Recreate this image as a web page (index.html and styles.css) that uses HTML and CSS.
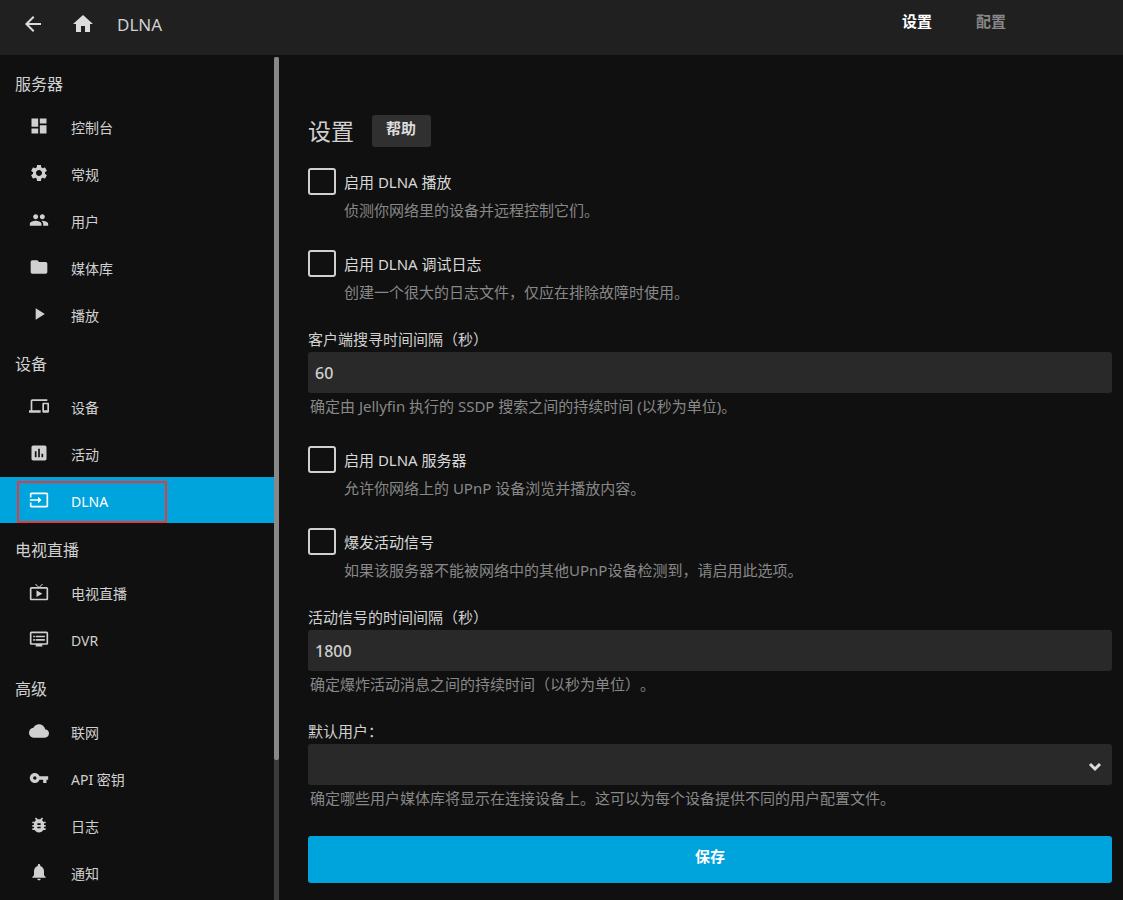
FILE: index.html
```html
<!DOCTYPE html>
<html lang="zh-CN">
<head>
<meta charset="utf-8">
<meta name="viewport" content="width=device-width, initial-scale=1">
<title>DLNA</title>
<link rel="stylesheet" href="styles.css">
</head>
<body>
<header class="topbar">
  <button class="icon-button" type="button" aria-label="返回"><svg viewBox="0 0 24 24"><path d="M20 11H7.83l5.59-5.59L12 4l-8 8 8 8 1.41-1.41L7.83 13H20v-2z"/></svg></button>
  <button class="icon-button" type="button" aria-label="首页"><svg viewBox="0 0 24 24"><path d="M10 20v-6h4v6h5v-8h3L12 3 2 12h3v8z"/></svg></button>
  <h1 class="page-title">DLNA</h1>
  <nav class="tabs">
    <a class="tab tab-active" href="#settings">设置</a>
    <a class="tab" href="#profiles">配置</a>
  </nav>
</header>
<div class="layout">
  <aside class="sidebar">
    <nav class="menu">
      <h2 class="menu-heading">服务器</h2>
      <a class="menu-item" href="#dashboard"><svg viewBox="0 0 24 24"><path d="M3 13h8V3H3v10zm0 8h8v-6H3v6zm10 0h8V11h-8v10zm0-18v6h8V3h-8z"/></svg><span>控制台</span></a>
      <a class="menu-item" href="#general"><svg viewBox="0 0 24 24"><path d="M19.14 12.94c.04-.3.06-.61.06-.94 0-.32-.02-.64-.07-.94l2.03-1.58c.18-.14.23-.41.12-.61l-1.92-3.32c-.12-.22-.37-.29-.59-.22l-2.39.96c-.5-.38-1.03-.7-1.62-.94l-.36-2.54c-.04-.24-.24-.41-.48-.41h-3.84c-.24 0-.43.17-.47.41l-.36 2.54c-.59.24-1.13.57-1.62.94l-2.39-.96c-.22-.08-.47 0-.59.22L2.74 8.87c-.12.21-.08.47.12.61l2.03 1.58c-.05.3-.09.63-.09.94s.02.64.07.94l-2.03 1.58c-.18.14-.23.41-.12.61l1.92 3.32c.12.22.37.29.59.22l2.39-.96c.5.38 1.03.7 1.62.94l.36 2.54c.05.24.24.41.48.41h3.84c.24 0 .44-.17.47-.41l.36-2.54c.59-.24 1.13-.56 1.62-.94l2.39.96c.22.08.47 0 .59-.22l1.92-3.32c.12-.22.07-.47-.12-.61l-2.01-1.58zM12 15.6c-1.98 0-3.6-1.62-3.6-3.6s1.62-3.6 3.6-3.6 3.6 1.62 3.6 3.6-1.62 3.6-3.6 3.6z"/></svg><span>常规</span></a>
      <a class="menu-item" href="#users"><svg viewBox="0 0 24 24"><path d="M16 11c1.66 0 2.99-1.34 2.99-3S17.66 5 16 5c-1.66 0-3 1.34-3 3s1.34 3 3 3zm-8 0c1.66 0 2.99-1.34 2.99-3S9.66 5 8 5C6.34 5 5 6.34 5 8s1.34 3 3 3zm0 2c-2.33 0-7 1.17-7 3.500V19h14v-2.500C15 14.170 10.330 13 8 13zm8 0c-.29 0-.62.020-.97.050 1.160.84 1.970 1.970 1.970 3.450V19h6v-2.500c0-2.330-4.670-3.500-7-3.500z"/></svg><span>用户</span></a>
      <a class="menu-item" href="#libraries"><svg viewBox="0 0 24 24"><path d="M10 4H4c-1.100 0-1.990.9-1.990 2L2 18c0 1.100.9 2 2 2h16c1.100 0 2-.9 2-2V8c0-1.100-.9-2-2-2h-8l-2-2z"/></svg><span>媒体库</span></a>
      <a class="menu-item" href="#playback"><svg viewBox="0 0 24 24"><path d="M8 5v14l11-7z"/></svg><span>播放</span></a>

      <h2 class="menu-heading">设备</h2>
      <a class="menu-item" href="#devices"><svg viewBox="0 0 24 24"><path d="M4 6h18V4H4c-1.100 0-2 .9-2 2v11H0v3h14v-3H4V6zm19 2h-6c-.55 0-1 .45-1 1v10c0 .55.45 1 1 1h6c.55 0 1-.45 1-1V9c0-.55-.45-1-1-1zm-1 9h-4v-7h4v7z"/></svg><span>设备</span></a>
      <a class="menu-item" href="#activity"><svg viewBox="0 0 24 24"><path d="M19 3H5c-1.100 0-2 .9-2 2v14c0 1.100.9 2 2 2h14c1.100 0 2-.9 2-2V5c0-1.100-.9-2-2-2zM9 17H7v-7h2v7zm4 0h-2V7h2v10zm4 0h-2v-4h2v4z"/></svg><span>活动</span></a>
      <a class="menu-item menu-item-active" href="#dlna" aria-current="page"><svg viewBox="0 0 24 24"><path d="M21 3.010H3c-1.100 0-2 .9-2 2V9h2V4.990h18v14.030H3V15H1v4.010c0 1.100.9 1.980 2 1.980h18c1.100 0 2-.88 2-1.980v-14c0-1.110-.9-2-2-2zM11 16l4-4-4-4v3H1v2h10v3z"/></svg><span>DLNA</span></a>

      <h2 class="menu-heading">电视直播</h2>
      <a class="menu-item" href="#livetv"><svg viewBox="0 0 24 24"><path d="M21 6h-7.590l3.290-3.290L16 2l-4 4-4-4-.71.71L10.590 6H3c-1.100 0-2 .89-2 2v12c0 1.100.9 2 2 2h18c1.100 0 2-.9 2-2V8c0-1.110-.9-2-2-2zm0 14H3V8h18v12zM9 10v8l7-4z"/></svg><span>电视直播</span></a>
      <a class="menu-item" href="#dvr"><svg viewBox="0 0 24 24"><path d="M21 3H3c-1.100 0-2 .9-2 2v12c0 1.100.9 2 2 2h5v2h8v-2h5c1.100 0 1.990-.9 1.990-2L23 5c0-1.100-.9-2-2-2zm0 14H3V5h18v12zm-2-9H8v2h11V8zm0 4H8v2h11v-2zM7 8H5v2h2V8zm0 4H5v2h2v-2z"/></svg><span>DVR</span></a>

      <h2 class="menu-heading">高级</h2>
      <a class="menu-item" href="#network"><svg viewBox="0 0 24 24"><path d="M19.350 10.040C18.670 6.590 15.640 4 12 4 9.110 4 6.600 5.640 5.350 8.040 2.340 8.360 0 10.910 0 14c0 3.310 2.690 6 6 6h13c2.760 0 5-2.240 5-5 0-2.640-2.050-4.780-4.650-4.960z"/></svg><span>联网</span></a>
      <a class="menu-item" href="#keys"><svg viewBox="0 0 24 24"><path d="M12.650 10C11.830 7.670 9.610 6 7 6c-3.310 0-6 2.690-6 6s2.690 6 6 6c2.610 0 4.830-1.670 5.650-4H17v4h4v-4h2v-4H12.650zM7 14c-1.100 0-2-.9-2-2s.9-2 2-2 2 .9 2 2-.9 2-2 2z"/></svg><span>API 密钥</span></a>
      <a class="menu-item" href="#logs"><svg viewBox="0 0 24 24"><path d="M20 8h-2.810c-.45-.78-1.070-1.450-1.820-1.960L17 4.410 15.590 3l-2.170 2.170C12.960 5.060 12.490 5 12 5c-.49 0-.96.060-1.410.17L8.410 3 7 4.410l1.620 1.630C7.880 6.550 7.260 7.220 6.810 8H4v2h2.090c-.050.33-.09.66-.09 1v1H4v2h2v1c0 .34.040.67.090 1H4v2h2.810c1.040 1.790 2.970 3 5.190 3s4.150-1.210 5.190-3H20v-2h-2.090c.050-.33.09-.66.09-1v-1h2v-2h-2v-1c0-.34-.040-.67-.09-1H20V8zm-6 8h-4v-2h4v2zm0-4h-4v-2h4v2z"/></svg><span>日志</span></a>
      <a class="menu-item" href="#notifications"><svg viewBox="0 0 24 24"><path d="M12 22c1.100 0 2-.9 2-2h-4c0 1.100.89 2 2 2zm6-6v-5c0-3.070-1.640-5.640-4.500-6.320V4c0-.83-.67-1.500-1.500-1.500s-1.500.67-1.500 1.500v.68C7.630 5.360 6 7.920 6 11v5l-2 2v1h16v-1l-2-2z"/></svg><span>通知</span></a>
    </nav>
    <div class="scroll-track" aria-hidden="true"><div class="scroll-thumb"></div></div>
  </aside>
  <main class="content">
    <form class="form">
      <div class="section-title">
        <h2 class="section-heading">设置</h2>
        <button class="help-button" type="button">帮助</button>
      </div>

      <div class="check">
        <input class="check-box" type="checkbox" id="enable-play">
        <label class="check-label" for="enable-play">启用 DLNA 播放</label>
        <p class="check-help">侦测你网络里的设备并远程控制它们。</p>
      </div>
      <div class="check">
        <input class="check-box" type="checkbox" id="enable-debug">
        <label class="check-label" for="enable-debug">启用 DLNA 调试日志</label>
        <p class="check-help">创建一个很大的日志文件<span class="punct">，</span>仅应在排除故障时使用。</p>
      </div>
      <div class="field">
        <label class="field-label" for="discovery">客户端搜寻时间间隔<span class="punct">（</span>秒<span class="punct">）</span></label>
        <input class="field-input" type="text" inputmode="numeric" id="discovery" value="60">
        <p class="field-help">确定由 Jellyfin 执行的 SSDP 搜索之间的持续时间 (以秒为单位)。</p>
      </div>
      <div class="check">
        <input class="check-box" type="checkbox" id="enable-server">
        <label class="check-label" for="enable-server">启用 DLNA 服务器</label>
        <p class="check-help">允许你网络上的 UPnP 设备浏览并播放内容。</p>
      </div>
      <div class="check">
        <input class="check-box" type="checkbox" id="blast-alive">
        <label class="check-label" for="blast-alive">爆发活动信号</label>
        <p class="check-help">如果该服务器不能被网络中的其他UPnP设备检测到<span class="punct">，</span>请启用此选项。</p>
      </div>
      <div class="field">
        <label class="field-label" for="alive-interval">活动信号的时间间隔<span class="punct">（</span>秒<span class="punct">）</span></label>
        <input class="field-input" type="text" inputmode="numeric" id="alive-interval" value="1800">
        <p class="field-help">确定爆炸活动消息之间的持续时间<span class="punct">（</span>以秒为单位<span class="punct">）</span>。</p>
      </div>
      <div class="field">
        <label class="field-label" for="default-user">默认用户<span class="punct">：</span></label>
        <div class="select-wrap">
          <select class="field-input" id="default-user"><option value=""></option></select>
          <svg class="select-arrow" viewBox="0 0 14 10"><path d="M2 2l5 5 5-5"/></svg>
        </div>
        <p class="field-help">确定哪些用户媒体库将显示在连接设备上。这可以为每个设备提供不同的用户配置文件。</p>
      </div>
      <button class="save-button" type="submit">保存</button>
    </form>
  </main>
</div>
</body>
</html>
```

FILE: styles.css
```css
* {
  box-sizing: border-box;
}

body {
  margin: 0;
  min-height: 100vh;
  display: flex;
  flex-direction: column;
  background: #101010;
  color: #d0d0d0;
  font-family: "Noto Sans", "Noto Sans CJK SC", sans-serif;
  font-size: 15px;
  line-height: 22px;
  text-spacing-trim: space-all;
}

h1, h2, p {
  margin: 0;
  font-weight: 400;
}

a {
  color: inherit;
  text-decoration: none;
}

button, input, select {
  font: inherit;
  color: inherit;
}

/* Full-width punctuation centred in its cell */
.punct {
  font-family: "Noto Sans CJK TC", sans-serif;
}

/* Top bar */
.topbar {
  display: flex;
  align-items: center;
  height: 55px;
  padding: 0 117px 7px 21px;
  background: #202020;
}

.icon-button {
  width: 24px;
  height: 24px;
  margin-right: 26px;
  padding: 0;
  border: 0;
  background: none;
}

.icon-button svg {
  display: block;
  fill: #dddddd;
}

.page-title {
  margin-left: -4px;
  padding-top: 2px;
  font-size: 17px;
}

.tabs {
  display: flex;
  gap: 44px;
  margin-left: auto;
  padding-bottom: 6px;
}

.tab {
  font-weight: 700;
  color: #888888;
}

.tab-active {
  color: #ffffff;
}

/* Side menu */
.layout {
  flex: 1;
  display: flex;
}

.sidebar {
  display: flex;
  flex: 0 0 279px;
}

.menu {
  flex: 1;
  padding-top: 3px;
}

.menu-heading {
  height: 45px;
  padding: 15px 0 0 15px;
  font-size: 16px;
}

.menu-item {
  position: relative;
  display: flex;
  align-items: center;
  gap: 22px;
  height: 46px;
  margin-bottom: 1px;
  padding-left: 29px;
  font-size: 14px;
}

.menu-item svg {
  width: 20px;
  height: 20px;
  fill: #d0d0d0;
}

.menu-item span {
  padding-top: 4px;
}

.menu-item-active {
  background: #00a4dc;
  color: #ffffff;
}

.menu-item-active svg {
  fill: #ffffff;
}

.menu-item-active::after {
  content: "";
  position: absolute;
  box-sizing: border-box;
  top: 4px;
  bottom: 0;
  left: 17px;
  width: 150px;
  border: 2px solid #e23c40;
}

.scroll-track {
  width: 5px;
  margin-top: 2px;
  background: #3b3b3b;
}

.scroll-thumb {
  height: 83.4%;
  border-radius: 2px;
  background: #888888;
}

/* Settings form */
.content {
  flex: 1;
  min-width: 0;
  padding: 60px 11px 16px 29px;
}

.section-title {
  display: flex;
  align-items: center;
  gap: 18px;
  height: 32px;
  margin-bottom: 21px;
}

.section-heading {
  font-size: 23px;
  line-height: 32px;
}

.help-button {
  height: 32px;
  padding: 0 15px 6px 14px;
  border: 0;
  border-radius: 3px;
  background: #303030;
  font-weight: 700;
  color: #dddddd;
}

.check {
  display: grid;
  grid-template-columns: 28px 1fr;
  column-gap: 8px;
  row-gap: 4px;
  margin-top: 28px;
  padding-bottom: 1px;
}

.check-box {
  appearance: none;
  width: 28px;
  height: 27px;
  margin: 0;
  border: 2px solid #d0d0d0;
  border-radius: 3px;
}

.check-label {
  padding-top: 3px;
  color: #d8d8d8;
}

.check-help {
  grid-column: 2;
  color: #888888;
}

.field {
  margin-top: 24px;
}

.field-label {
  display: block;
  margin-bottom: 2px;
}

.field-input {
  display: block;
  width: 100%;
  height: 41px;
  padding: 0 7px;
  border: 0;
  border-radius: 3px;
  background: #292929;
  font-size: 16px;
  font-weight: 500;
  appearance: none;
}

.field-help {
  margin-top: 2px;
  padding: 0 0 1px 2px;
  color: #888888;
}

.select-wrap {
  position: relative;
}

.select-arrow {
  position: absolute;
  top: 18px;
  right: 10px;
  width: 14px;
  height: 10px;
  fill: none;
  stroke: #dddddd;
  stroke-width: 3;
  pointer-events: none;
}

.save-button {
  display: block;
  width: 100%;
  height: 47px;
  margin-top: 26px;
  padding: 0 0 8px;
  border: 0;
  border-radius: 3px;
  background: #00a4dc;
  color: #ffffff;
  font-weight: 700;
}

.section-title + .check {
  margin-top: 0;
}
```
